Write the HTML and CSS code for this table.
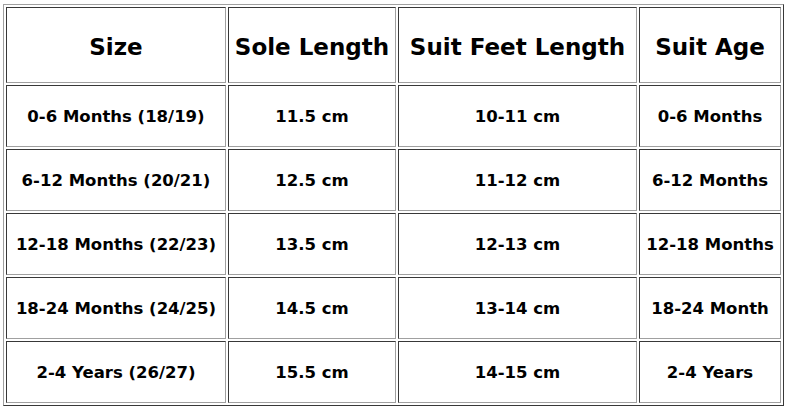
FILE: index.html
```html
<!DOCTYPE html>
<html>
<head>
<meta charset="utf-8">
<link rel="stylesheet" href="styles.css">
</head>
<body>
<table class="chart">
  <tr class="head">
    <th class="c1">Size</th>
    <th class="c2">Sole Length</th>
    <th class="c3">Suit Feet Length</th>
    <th class="c4">Suit Age</th>
  </tr>
  <tr>
    <td>0-6 Months (18/19)</td>
    <td>11.5 cm</td>
    <td>10-11 cm</td>
    <td>0-6 Months</td>
  </tr>
  <tr>
    <td>6-12 Months (20/21)</td>
    <td>12.5 cm</td>
    <td>11-12 cm</td>
    <td>6-12 Months</td>
  </tr>
  <tr>
    <td>12-18 Months (22/23)</td>
    <td>13.5 cm</td>
    <td>12-13 cm</td>
    <td>12-18 Months</td>
  </tr>
  <tr>
    <td>18-24 Months (24/25)</td>
    <td>14.5 cm</td>
    <td>13-14 cm</td>
    <td>18-24 Month</td>
  </tr>
  <tr>
    <td>2-4 Years (26/27)</td>
    <td>15.5 cm</td>
    <td>14-15 cm</td>
    <td>2-4 Years</td>
  </tr>
</table>
</body>
</html>
```
FILE: styles.css
```css
html, body {
  margin: 0;
  padding: 0;
  background: #ffffff;
}
.chart {
  margin: 4px 0 0 3px;
  border-collapse: separate;
  border-spacing: 2px;
  border-style: solid;
  border-width: 1px;
  border-color: #a0a0a0 #383838 #383838 #a0a0a0;
  font-family: "DejaVu Sans", sans-serif;
  color: #000;
  table-layout: fixed;
}
.chart th,
.chart td {
  box-sizing: border-box;
  padding: 0;
  text-align: center;
  vertical-align: middle;
  border-style: solid;
  border-width: 1px;
  border-color: #383838 #a0a0a0 #a0a0a0 #383838;
  background: #fff;
  white-space: nowrap;
}
.chart th {
  height: 76px;
  padding-top: 3px;
  font-size: 23px;
  font-weight: bold;
}
.chart td {
  height: 62px;
  font-size: 16.5px;
  font-weight: bold;
}
.c1 { width: 220px; }
.c2 { width: 168px; }
.c3 { width: 239px; }
.c4 { width: 142px; }
```
